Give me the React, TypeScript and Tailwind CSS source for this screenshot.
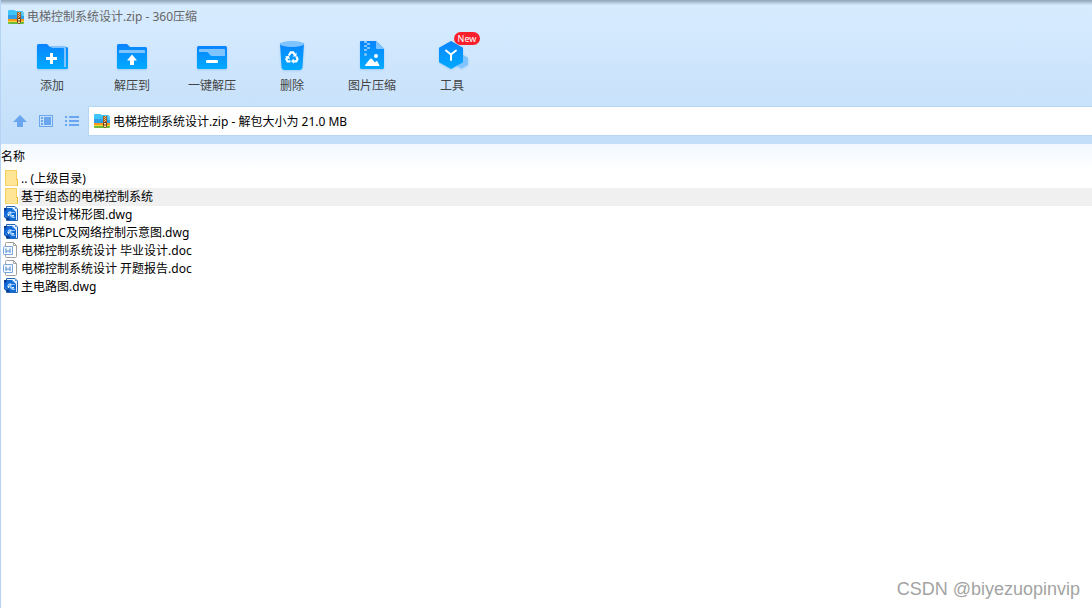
import type { ReactNode } from 'react';

function ZipIcon() {
  return (
    <svg className="h-4 w-4 shrink-0" viewBox="0 0 16 16" aria-hidden="true">
      <path d="M0 2q0-1 1-1h5l2 1h6q1 0 1 1v7H0z" fill="#3fc4fa" />
      <path d="M0 6h16v4H0z" fill="#2f9fe9" />
      <path d="M14 3h1q1 0 1 1v3h-2z" fill="#5ecbf8" />
      <path d="M0 10h16v2H0z" fill="#f79a1c" />
      <path d="M0 12h16v1H0z" fill="#fcd638" />
      <path d="M0 13h16v1q0 1-1 1H1q-1 0-1-1z" fill="#6cb83b" />
      <path d="M9 3h4v7H9z" fill="#a0602f" />
      <path d="M11 3h1v1h-1zM10 4h1v1h-1zM11 5h1v1h-1zM10 6h1v1h-1zM11 7h1v1h-1zM10 8h1v1h-1z" fill="#f3bd6a" />
      <path d="M9.500 9.500h3v4l-1 1h-1l-1-1z" fill="#ffe9a6" stroke="#6f3c16" />
      <path d="M10.500 11h1v2h-1z" fill="#6f3c16" />
    </svg>
  );
}

function BlueGradient({ id }: { id: string }) {
  return (
    <defs>
      <linearGradient id={id} x1="0" y1="0" x2="0" y2="1">
        <stop offset="0" stopColor="#0a84ff" />
        <stop offset="1" stopColor="#00aaff" />
      </linearGradient>
    </defs>
  );
}

const toolIcon = 'h-8 w-8 overflow-visible drop-shadow-[0_1px_1px_rgba(40,130,230,0.25)]';

function AddIcon() {
  return (
    <svg className={toolIcon} viewBox="0 0 32 32" aria-hidden="true">
      <BlueGradient id="add" />
      <path d="M1 5.500Q1 4 2.500 4H11l3 3h16.500Q32 7 32 8.500V27.500Q32 29 30.500 29h-28Q1 29 1 27.500z" fill="url(#add)" />
      <path d="M14 6h14q2 0 2 2v19h-2V9q0-1-1-1H16z" fill="#7fc2ff" />
      <path d="M14 13h3v4h4v3h-4v4h-3v-4h-4v-3h4z" fill="#fff" />
    </svg>
  );
}

function ExtractIcon() {
  return (
    <svg className={toolIcon} viewBox="0 0 32 32" aria-hidden="true">
      <BlueGradient id="extract" />
      <path d="M1 5.500Q1 4 2.500 4H11l3 3h15.500Q31 7 31 8.500V27.500Q31 29 29.500 29h-27Q1 29 1 27.500z" fill="url(#extract)" />
      <path d="M3 11q0-1 1-1h24q1 0 1 1v2H3z" fill="#80c4ff" />
      <path d="M16 14.500l5 6h-3V25h-4v-4.500h-3z" fill="#fff" />
    </svg>
  );
}

function QuickExtractIcon() {
  return (
    <svg className={toolIcon} viewBox="0 0 32 32" aria-hidden="true">
      <BlueGradient id="quick" />
      <rect x="1" y="6" width="30" height="23" rx="1.500" fill="url(#quick)" />
      <path d="M3 10q0-1 1-1h24q1 0 1 1v6H16q-1 0-2-1l-2-2.500q-.5-.5-1-.5H3z" fill="#80c4ff" />
      <rect x="10" y="20" width="12" height="3" rx="1" fill="#fff" />
    </svg>
  );
}

function DeleteIcon() {
  return (
    <svg className={toolIcon} viewBox="0 0 32 32" aria-hidden="true">
      <BlueGradient id="delete" />
      <path d="M4 3.500h24L26.500 27q-.2 3-3.500 3H9q-3.300 0-3.500-3z" fill="url(#delete)" />
      <ellipse cx="16" cy="4" rx="12" ry="3" fill="#7fc4ff" />
      <g fill="none" stroke="#fff" strokeWidth="2.200">
        <path d="M12.800 15.500l2-3.200h2.400l1.500 2.400" />
        <path d="M20.300 16.500l1.200 2.500-1.200 2.300h-3" />
        <path d="M14.500 21.300h-3L10.300 19l1-1.800" />
      </g>
      <path d="M20.500 12.500v4h-4zM17.800 18.500v5.300l-2.800-2.600zM9 16.500l4-.8.800 3.800z" fill="#fff" />
    </svg>
  );
}

function ImageZipIcon() {
  return (
    <svg className={toolIcon} viewBox="0 0 32 32" aria-hidden="true">
      <BlueGradient id="image" />
      <path d="M4 2q0-1 1-1h15l8 8v18.500q0 1.500-1.500 1.500h-21Q4 29 4 27.500z" fill="url(#image)" />
      <path d="M20 1l8 8h-7q-1 0-1-1z" fill="#80c4ff" />
      <path d="M8 1h3v2H8zM11 3h3v2h-3zM8 5h3v2H8zM11 7h3v2h-3zM8 9h3v2H8z" fill="#80c4ff" />
      <circle cx="9.500" cy="14.500" r="1.500" fill="#80c4ff" />
      <circle cx="20" cy="16" r="2" fill="#fff" />
      <path d="M9 26q0-1 .5-1.500L14 19q1-1 2 0l3 3.500 1-1q.8-.8 1.500 0l1.500 3q1 1.500 0 1.500z" fill="#fff" />
    </svg>
  );
}

function ToolsIcon() {
  return (
    <svg className={toolIcon} viewBox="0 0 32 32" aria-hidden="true">
      <BlueGradient id="tools" />
      <path d="M25.500 14l6.500 3.700v7L25.500 28.500 19 24.700v-7z" fill="#7fc4ff" />
      <path d="M15 1l12 6.800v14.400L15 29 3 22.200V7.800z" fill="url(#tools)" />
      <path d="M10 10.500l5 4 5-4M15 14.500V20" fill="none" stroke="#fff" strokeWidth="2" strokeLinecap="round" />
    </svg>
  );
}

function FolderIcon() {
  return (
    <svg className="h-4 w-4 shrink-0" viewBox="0 0 16 16" aria-hidden="true">
      <path d="M2 0h12v16H2z" fill="#ffe595" />
      <path d="M2.500 16V.5h11V10" fill="none" stroke="#f5cf59" />
      <path d="M13 9h2v7h-2z" fill="#edbf43" />
      <path d="M13 10h1v5h-1z" fill="#ffe595" />
      <path d="M2 15h12v1H2z" fill="#f7d775" />
    </svg>
  );
}

function DwgIcon() {
  return (
    <svg className="h-4 w-4 shrink-0" viewBox="0 0 16 16" aria-hidden="true">
      <path d="M3.500.5H12l2.500 2.500v11.500h-11z" fill="#e9f3ff" stroke="#2468b8" />
      <path d="M1 2h8l4 4v8H5l-4-3z" fill="#1269d6" />
      <path d="M1 2h3L2 6zM1 10l4 1 2 3H4z" fill="#07388a" />
      <path d="M5 6l2-1 2 1h3v1H9L8 8l2 2 2 1v1H9L6 9H4z" fill="#8cc4fb" />
      <path d="M7 6h1v1H7zM9 9h2v1H9zM5 8h1v2H5z" fill="#e3f2ff" />
      <path d="M9 2l3 3-3-1zM3 9l2 3-3-1z" fill="#3f93ee" />
      <path d="M12 1v2h2z" fill="#4c8edb" />
    </svg>
  );
}

function DocIcon() {
  return (
    <svg className="h-4 w-4 shrink-0" viewBox="0 0 16 16" aria-hidden="true">
      <path d="M3.500.5h7l3 3v11q0 1-1 1h-9q-1 0-1-1v-13q0-1 1-1z" fill="#fff" stroke="#a0a0a0" />
      <path d="M10.500.5v3h3" fill="none" stroke="#a0a0a0" />
      <path d="M1.500 4.500h8v8h-8q-1 0-1-1v-6q0-1 1-1z" fill="#f4f9ff" stroke="#7aa5dc" />
      <path d="M3 6.500v4l2-2 2 2v-4" fill="none" stroke="#3f80d0" />
    </svg>
  );
}

type Tool = { label: string; icon: ReactNode; badge?: string };

const tools: Tool[] = [
  { label: '添加', icon: <AddIcon /> },
  { label: '解压到', icon: <ExtractIcon /> },
  { label: '一键解压', icon: <QuickExtractIcon /> },
  { label: '删除', icon: <DeleteIcon /> },
  { label: '图片压缩', icon: <ImageZipIcon /> },
  { label: '工具', icon: <ToolsIcon />, badge: 'New' },
];

const files = [
  { name: '.. (上级目录)', icon: <FolderIcon /> },
  { name: '基于组态的电梯控制系统', icon: <FolderIcon />, selected: true },
  { name: '电控设计梯形图.dwg', icon: <DwgIcon /> },
  { name: '电梯PLC及网络控制示意图.dwg', icon: <DwgIcon /> },
  { name: '电梯控制系统设计 毕业设计.doc', icon: <DocIcon /> },
  { name: '电梯控制系统设计 开题报告.doc', icon: <DocIcon /> },
  { name: '主电路图.dwg', icon: <DwgIcon /> },
];

function NavButton({ label, children }: { label: string; children: ReactNode }) {
  return (
    <button type="button" aria-label={label} className="flex h-[30px] w-[26px] items-center justify-center">
      <svg className="h-[14px] w-[14px]" viewBox="0 0 14 14" fill="#6aa5f0" aria-hidden="true">
        {children}
      </svg>
    </button>
  );
}

export default function App() {
  return (
    <div className="relative flex min-h-screen flex-col border-l border-[#b5d4f5] bg-white font-['Noto_Sans','Noto_Sans_CJK_SC',sans-serif] text-xs text-black">
      <header className="bg-linear-to-b from-[#d8ecff] to-[#c2def9]">
        <div className="h-[5px] bg-linear-to-b from-[#8fa3b9] to-[#d4e7fa]" />

        {/* Title bar */}
        <div className="flex h-6 items-center gap-[3px] pl-[7px] text-[#666]">
          <ZipIcon />
          <h1>电梯控制系统设计.zip - 360压缩</h1>
        </div>

        {/* Toolbar */}
        <div className="flex h-[77px] pt-[11px] pl-[11px]">
          {tools.map((tool) => (
            <button key={tool.label} type="button" className="relative flex w-20 flex-col items-center gap-[5px] text-[#444]">
              {tool.icon}
              <span className="leading-[18px]">{tool.label}</span>
              {tool.badge && (
                <span className="absolute -top-2 left-[42px] h-[13px] w-[26px] rounded-full bg-[#f9202c] text-center text-[9px] leading-[13px] text-white">
                  {tool.badge}
                </span>
              )}
            </button>
          ))}
        </div>

        {/* Address bar */}
        <div className="flex pb-2 pl-[6px]">
          <NavButton label="向上">
            <path d="M7 1l7 7h-4v5H4V8H0z" />
          </NavButton>
          <NavButton label="预览">
            <path d="M0 1h14v12H0zM1 2v10h12V2z" fillRule="evenodd" />
            <path d="M2 3h2v2H2zM2 6h2v2H2zM2 9h2v2H2zM5 3h7v8H5z" />
          </NavButton>
          <NavButton label="列表">
            <path d="M0 2h2v2H0zM4 2h10v2H4zM0 6h2v2H0zM4 6h10v2H4zM0 10h2v2H0zM4 10h10v2H4z" />
          </NavButton>
          <div className="ml-[3px] flex h-[30px] flex-1 items-center gap-[3px] border-y border-l border-[#b6d6f5] bg-white pl-[5px]">
            <ZipIcon />
            <input
              type="text"
              readOnly
              aria-label="路径"
              value="电梯控制系统设计.zip - 解包大小为 21.0 MB"
              className="h-full min-w-0 flex-1 outline-none"
            />
          </div>
        </div>
      </header>

      {/* File list */}
      <main className="flex-1">
        <table className="w-full border-collapse">
          <thead>
            <tr className="h-[26px] bg-linear-to-b from-[#f1f8ff] to-white">
              <th scope="col" className="p-0 text-left font-normal">
                名称
              </th>
            </tr>
          </thead>
          <tbody>
            {files.map((file) => (
              <tr key={file.name}>
                <td className="p-0">
                  <div className="flex h-[18px] pl-[2px]">
                    {file.icon}
                    <span className={`flex-1 pl-[2px] leading-[18px] ${file.selected ? 'bg-[#f0f0f0]' : ''}`}>{file.name}</span>
                  </div>
                </td>
              </tr>
            ))}
          </tbody>
        </table>
      </main>

      <div className="absolute right-3 bottom-[7px] font-['Liberation_Sans',sans-serif] text-lg leading-6 text-[#a3a3a3]">
        CSDN @biyezuopinvip
      </div>
    </div>
  );
}
